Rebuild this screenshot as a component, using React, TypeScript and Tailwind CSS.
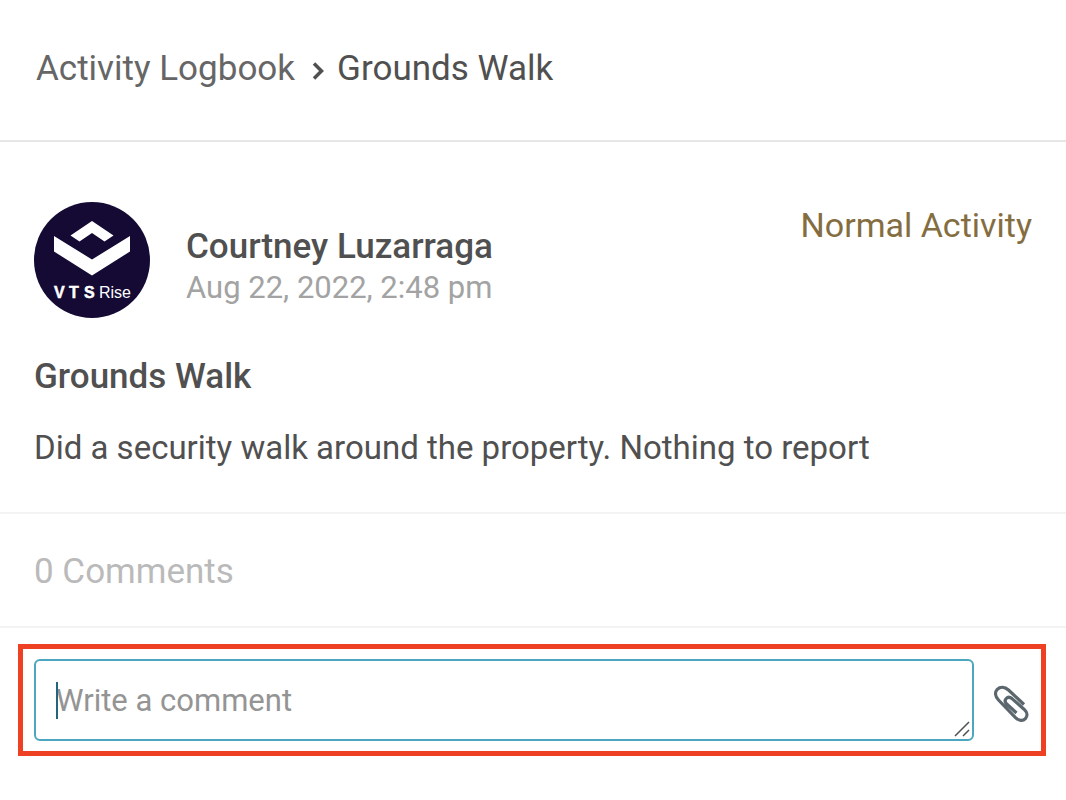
const activity = {
  author: "Courtney Luzarraga",
  date: "Aug 22, 2022, 2:48 pm",
  status: "Normal Activity",
  title: "Grounds Walk",
  body: "Did a security walk around the property. Nothing to report",
};

function Avatar() {
  return (
    <svg
      viewBox="0 0 116 116"
      className="size-[116px] shrink-0"
      role="img"
      aria-label="VTS Rise"
    >
      <circle cx="58" cy="58" r="58" fill="#140a33" />
      <path d="M58 19 L79.500 33.500 L70.500 39.500 L58 31 L45.500 39.500 L36.500 33.500 Z" fill="#fff" />
      <path d="M20 34 L58 57.500 L96 34 V49.500 L58 73.500 L20 49.500 Z" fill="#fff" />
      <text
        y="96"
        fill="#fff"
        stroke="#fff"
        strokeWidth="0.500"
        fontSize="16"
        fontWeight="700"
        fontFamily="'Liberation Sans', sans-serif"
      >
        <tspan x="20">V</tspan>
        <tspan x="35">T</tspan>
        <tspan x="50">S</tspan>
      </text>
      <text
        x="65"
        y="96"
        fill="#fff"
        fontSize="16"
        fontFamily="'Liberation Sans', sans-serif"
      >
        Rise
      </text>
    </svg>
  );
}

function PaperclipIcon() {
  return (
    <svg
      viewBox="6 2 36 40"
      className="h-10 w-9"
      fill="none"
      stroke="#5b676d"
      strokeWidth="3.200"
      aria-hidden="true"
    >
      <path d="M36 23.500 L20.500 9 C16.500 5.400 12 5.600 9.300 8.300 C6.600 11.300 7.200 15.600 10.500 19 L27.500 36.600 C31 40 35 40.200 37.400 37.600 C39.900 34.900 39.200 31.200 36 28.200 L24 17.600 C21.800 15.800 19.700 15.900 18.200 17.500 C16.700 19.200 16.900 21.300 18.700 23 L28.500 32" />
    </svg>
  );
}

export default function App() {
  return (
    <main className="bg-white font-['Roboto',sans-serif] text-[#505050]">
      <header className="border-b-2 border-[#e6e6e6] px-9 pt-[49px] pb-[51px]">
        <nav aria-label="Breadcrumb" className="flex items-center text-[35px]/10">
          <a href="#logbook" className="text-[#666666]">
            Activity Logbook
          </a>
          <svg
            viewBox="0 0 14 20"
            className="mt-1 mr-3 ml-4 h-5 w-3.5"
            fill="none"
            stroke="#505050"
            strokeWidth="3.500"
            aria-hidden="true"
          >
            <path d="M3 2.500 L10.500 10 L3 17.500" />
          </svg>
          <span aria-current="page">{activity.title}</span>
        </nav>
      </header>

      <article className="border-b-2 border-[#f3f3f3] px-[34px] pt-[60px] pb-11">
        <div className="flex items-start">
          <Avatar />
          <div className="ml-9 pt-[25px]">
            <h2 className="text-[35px]/10 font-medium">{activity.author}</h2>
            <p className="pt-px text-[31px]/10 text-[#a3a3a3]">{activity.date}</p>
          </div>
          <p className="ml-auto pt-[3px] text-[34px]/10 text-[#846d40]">
            {activity.status}
          </p>
        </div>
        <h1 className="mt-[39px] text-[35px]/10 font-medium">{activity.title}</h1>
        <p className="mt-[31px] text-[33px]/10">{activity.body}</p>
      </article>

      <section>
        <h3 className="border-b-2 border-[#f3f3f3] px-[34px] pt-[38px] pb-[34px] text-[35px]/10 text-[#bababa]">
          0 Comments
        </h3>
        <form className="mt-4 mr-5 ml-[18px] flex items-center border-[5px] border-[#ee4023] px-[11px] py-2.5">
          <div className="relative flex-1">
            <textarea
              rows={1}
              aria-label="Write a comment"
              placeholder="Write a comment"
              className="block h-[82px] w-full resize-none rounded-md border-2 border-[#4ba6bf] px-5 py-5 text-[31px]/10 outline-none placeholder:text-[#949494]"
            />
            <span className="absolute top-[23px] left-[22px] h-[37px] w-0.5 bg-[#23657d]" />
            <svg
              viewBox="0 0 16 16"
              className="absolute right-1 bottom-1 size-4"
              stroke="#505050"
              strokeWidth="1.500"
              aria-hidden="true"
            >
              <path d="M1 15 L15 1 M9 15 L15 9" />
            </svg>
          </div>
          <button type="button" aria-label="Attach a file" className="ml-5 pt-1.5">
            <PaperclipIcon />
          </button>
        </form>
      </section>
    </main>
  );
}
